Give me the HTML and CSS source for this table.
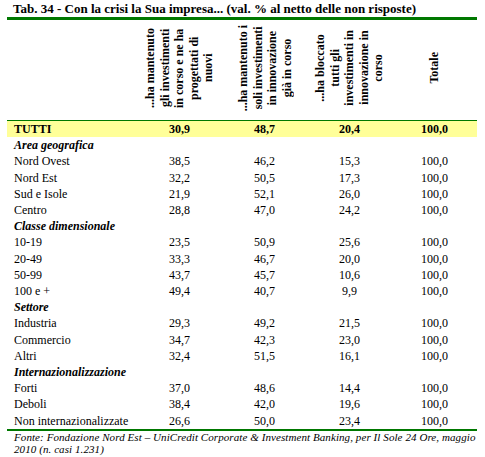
FILE: index.html
```html
<!DOCTYPE html>
<html lang="it">
<head>
  <meta charset="UTF-8">
  <title>Tab. 34</title>
  <link rel="stylesheet" href="styles.css">
</head>
<body>
  <div class="tab">
    <h1>Tab. 34 - Con la crisi la Sua impresa... (val. % al netto delle non risposte)</h1>
    <table>
      <thead>
        <tr>
          <th class="label"></th>
          <th><div class="vert">...ha mantenuto<br>gli investimenti<br>in corso e ne ha<br>progettati di<br>nuovi</div></th>
          <th><div class="vert">...ha mantenuto i<br>soli investimenti<br>in innovazione<br>già in corso</div></th>
          <th><div class="vert">...ha bloccato<br>tutti gli<br>investimenti in<br>innovazione in<br>corso</div></th>
          <th><div class="vert">Totale</div></th>
        </tr>
      </thead>
      <tbody>
        <tr class="all"><td>TUTTI</td><td>30,9</td><td>48,7</td><td>20,4</td><td>100,0</td></tr>
        <tr class="group"><td colspan="5">Area geografica</td></tr>
        <tr><td>Nord Ovest</td><td>38,5</td><td>46,2</td><td>15,3</td><td>100,0</td></tr>
        <tr><td>Nord Est</td><td>32,2</td><td>50,5</td><td>17,3</td><td>100,0</td></tr>
        <tr><td>Sud e Isole</td><td>21,9</td><td>52,1</td><td>26,0</td><td>100,0</td></tr>
        <tr><td>Centro</td><td>28,8</td><td>47,0</td><td>24,2</td><td>100,0</td></tr>
        <tr class="group"><td colspan="5">Classe dimensionale</td></tr>
        <tr><td>10-19</td><td>23,5</td><td>50,9</td><td>25,6</td><td>100,0</td></tr>
        <tr><td>20-49</td><td>33,3</td><td>46,7</td><td>20,0</td><td>100,0</td></tr>
        <tr><td>50-99</td><td>43,7</td><td>45,7</td><td>10,6</td><td>100,0</td></tr>
        <tr><td>100 e +</td><td>49,4</td><td>40,7</td><td>9,9</td><td>100,0</td></tr>
        <tr class="group"><td colspan="5">Settore</td></tr>
        <tr><td>Industria</td><td>29,3</td><td>49,2</td><td>21,5</td><td>100,0</td></tr>
        <tr><td>Commercio</td><td>34,7</td><td>42,3</td><td>23,0</td><td>100,0</td></tr>
        <tr><td>Altri</td><td>32,4</td><td>51,5</td><td>16,1</td><td>100,0</td></tr>
        <tr class="group"><td colspan="5">Internazionalizzazione</td></tr>
        <tr><td>Forti</td><td>37,0</td><td>48,6</td><td>14,4</td><td>100,0</td></tr>
        <tr><td>Deboli</td><td>38,4</td><td>42,0</td><td>19,6</td><td>100,0</td></tr>
        <tr class="last"><td>Non internazionalizzate</td><td>26,6</td><td>50,0</td><td>23,4</td><td>100,0</td></tr>
      </tbody>
    </table>
    <p class="source">Fonte: Fondazione Nord Est – UniCredit Corporate &amp; Investment Banking, per Il Sole 24 Ore, maggio<br>2010 (n. casi 1.231)</p>
  </div>
</body>
</html>
```

FILE: styles.css
```css
body {
  margin: 0;
  background-color: #fff;
  color: #000;
  font-family: "Times New Roman", "Liberation Serif", Tinos, Times, serif;
}
.tab {
  width: 470px;
  margin-left: 7px;
}
h1 {
  margin: 0;
  padding-left: 6px;
  font-size: 13px;
  line-height: 17px;
  font-weight: bold;
  border-bottom: 3px solid #007800;
}
table {
  width: 470px;
  border-collapse: collapse;
  table-layout: fixed;
  font-size: 12px;
}
th {
  height: 100px;
  padding: 0;
  width: 85px;
  text-align: center;
  vertical-align: middle;
}
th.label {
  width: 130px;
}
.vert {
  display: inline-block;
  writing-mode: vertical-rl;
  transform: rotate(180deg);
  line-height: 14.5px;
  font-size: 12px;
  font-weight: bold;
  white-space: nowrap;
}
td {
  padding: 0;
  line-height: 16.2px;
  text-align: center;
}
td:first-child {
  text-align: left;
  padding-left: 7px;
}
tr.all td {
  background-color: #ffff99;
  font-weight: bold;
  border-top: 1px solid #007800;
}
tr.group td {
  font-weight: bold;
  font-style: italic;
}
tr.last td {
  border-bottom: 2px solid #007800;
}
.source {
  margin: 0;
  padding-left: 7px;
  font-size: 11px;
  line-height: 12.5px;
  font-style: italic;
  letter-spacing: 0.08px;
  white-space: nowrap;
}
```
